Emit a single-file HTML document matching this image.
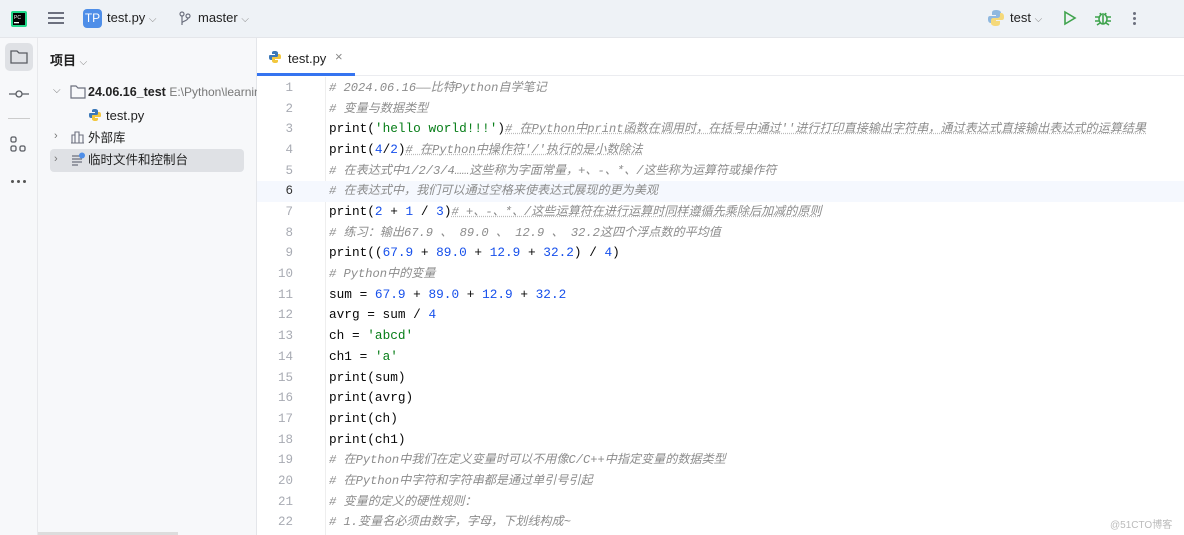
<!DOCTYPE html>
<html><head><meta charset="utf-8"><style>
*{margin:0;padding:0;box-sizing:border-box}
body{width:1184px;height:535px;overflow:hidden;background:#fff;font-family:"Liberation Sans","Noto Sans CJK SC",sans-serif;position:relative;color:#222}
.top{position:absolute;left:0;top:0;width:1184px;height:38px;background:#eef2f6;border-bottom:1px solid #e4e6ea}
.side{position:absolute;left:0;top:38px;width:38px;height:497px;background:#f7f8fa;border-right:1px solid #e8e9ec}
.proj{position:absolute;left:38px;top:38px;width:219px;height:497px;background:#f7f8fa;border-right:1px solid #e4e6ea}
.abs{position:absolute;white-space:nowrap}
.tabbar{position:absolute;left:257px;top:38px;right:0;height:38px;border-bottom:1px solid #ebecf0;background:#fff}
.gut{position:absolute;left:257px;top:77px;width:69px;height:458px;background:#fff;border-right:1px solid #eee}
.ln{position:absolute;left:257px;width:36px;text-align:right;font-family:"Liberation Mono",monospace;font-size:12.5px;line-height:16px;height:16px;color:#a8abb3}
.code{position:absolute;left:329px;font-family:"Liberation Mono","Noto Sans CJK SC",monospace;font-size:12.75px;line-height:16px;height:16px;color:#080808;white-space:pre}
.c{color:#8c8c8c;font-style:italic;font-size:12.1px;line-height:16px}
.s{color:#067d17}.n{color:#1750eb}.f{color:#000080}
.u{text-decoration:underline dotted #bbb}
</style></head><body>
<div class="top"></div>
<svg class="abs" style="left:10px;top:10px" width="18" height="18"><rect x="1" y="1" width="16" height="16" rx="2" fill="#21d789"/><rect x="3" y="3" width="12" height="12" fill="#000"/><text x="4" y="9" font-size="5" fill="#fff" font-family="Liberation Sans">PC</text><rect x="4" y="12" width="5" height="1.3" fill="#fff"/></svg>
<div class="abs" style="left:48px;top:12px;width:16px;height:2px;background:#6c707e;box-shadow:0 5px 0 #6c707e,0 10px 0 #6c707e"></div>
<div class="abs" style="left:83px;top:9px;width:19px;height:19px;border-radius:4px;background:#4e8ee8;color:#fff;font-size:12px;line-height:19px;text-align:center">TP</div>
<div class="abs" style="left:107px;top:10px;font-size:13px;color:#222">test.py <span style="color:#888;font-size:10px">⌵</span></div>
<svg class="abs" style="left:178px;top:11px" width="14" height="16" fill="none" stroke="#6c707e" stroke-width="1.2"><circle cx="4" cy="3" r="2"/><circle cx="10" cy="5" r="2"/><path d="M4 5v9M10 7c0 3-6 3-6 5"/></svg>
<div class="abs" style="left:198px;top:10px;font-size:13px">master <span style="color:#888;font-size:10px">⌵</span></div>
<svg class="abs" style="left:987px;top:9px" width="18" height="18"><path d="M9 1C5 1 5 3 5 4v2h4v1H3C1 7 1 9 1 10s0 4 3 4h1v-3c0-1 1-2 3-2h4c1 0 2-1 2-2V4c0-2-2-3-5-3z" fill="#8fb8df"/><path d="M9 17c4 0 4-2 4-3v-2H9v-1h6c2 0 2-2 2-3s0-4-3-4h-1v3c0 1-1 2-3 2H6c-1 0-2 1-2 2v3c0 2 2 3 5 3z" fill="#f5d97a"/></svg>
<div class="abs" style="left:1010px;top:10px;font-size:13px">test <span style="color:#888;font-size:10px">⌵</span></div>
<svg class="abs" style="left:1063px;top:10px" width="14" height="16"><path d="M2 2l10 6-10 6z" fill="none" stroke="#3fa34d" stroke-width="1.6"/></svg>
<svg class="abs" style="left:1094px;top:9px" width="18" height="18" fill="none" stroke="#3fa34d" stroke-width="1.6"><ellipse cx="9" cy="10" rx="4" ry="5"/><path d="M6 4l1 2M12 4l-1 2M1 8h4M13 8h4M1 12h4M13 12h4M3 16l3-2M15 16l-3-2M9 6v9"/></svg>
<div class="abs" style="left:1133px;top:12px;width:3px;height:3px;border-radius:50%;background:#6c707e;box-shadow:0 5px 0 #6c707e,0 10px 0 #6c707e"></div>

<div class="side"></div>
<div class="abs" style="left:5px;top:43px;width:28px;height:28px;border-radius:5px;background:#dfe1e5"></div>
<svg class="abs" style="left:10px;top:49px" width="18" height="16" fill="none" stroke="#5a5d63" stroke-width="1.3"><path d="M1 2h6l2 2h8v10H1z"/></svg>
<svg class="abs" style="left:9px;top:88px" width="20" height="12" fill="none" stroke="#5a5d63" stroke-width="1.3"><circle cx="10" cy="6" r="3"/><path d="M0 6h7M13 6h7"/></svg>
<div class="abs" style="left:8px;top:118px;width:22px;height:1px;background:#ccc"></div>
<svg class="abs" style="left:10px;top:136px" width="18" height="18" fill="none" stroke="#5a5d63" stroke-width="1.3"><rect x="1" y="1" width="5" height="5" rx="1.5"/><rect x="1" y="10" width="5" height="5" rx="1.5"/><rect x="10" y="10" width="5" height="5" rx="1.5"/></svg>
<div class="abs" style="left:11px;top:180px;width:3px;height:3px;border-radius:50%;background:#555;box-shadow:6px 0 0 #555,12px 0 0 #555"></div>

<div class="proj"></div>
<div class="abs" style="left:50px;top:50px;font-size:13px;font-weight:bold;color:#222">项目 <span style="color:#888;font-size:10px;font-weight:normal">⌵</span></div>
<div class="abs" style="left:53px;top:85px;font-size:10px;color:#777">⌵</div>
<svg class="abs" style="left:70px;top:85px" width="16" height="14" fill="none" stroke="#6c707e" stroke-width="1.2"><path d="M1 1h5l2 2h7v10H1z"/></svg>
<div class="abs" style="left:88px;top:85px;font-size:12.5px"><b>24.06.16_test</b> <span style="color:#777;font-size:12px">E:\Python\learnin</span></div>
<svg class="abs" style="left:88px;top:108px" width="14" height="14"><path d="M7 1C4 1 4 2 4 3v1h3v1H2C1 5 1 6 1 7s0 3 2 3h1V8c0-1 1-1 2-1h3c1 0 1-1 1-1V3c0-1-1-2-3-2z" fill="#3b78b8"/><path d="M7 13c3 0 3-1 3-2v-1H7V9h5c1 0 1-1 1-2s0-3-2-3h-1v2c0 1-1 1-2 1H5c-1 0-1 1-1 1v3c0 1 1 2 3 2z" fill="#f2c73d"/></svg>
<div class="abs" style="left:106px;top:108px;font-size:13px">test.py</div>
<div class="abs" style="left:54px;top:130px;font-size:11px;color:#777">›</div>
<svg class="abs" style="left:71px;top:131px" width="14" height="13" fill="none" stroke="#6c707e" stroke-width="1.1"><path d="M1 12V4h3v8M4 12V1h4v11M8 12V4h4v8M0 12h13"/></svg>
<div class="abs" style="left:88px;top:130px;font-size:12.5px;line-height:16px">外部库</div>
<div class="abs" style="left:50px;top:149px;width:194px;height:23px;border-radius:4px;background:#dfe1e5"></div>
<div class="abs" style="left:54px;top:153px;font-size:11px;color:#777">›</div>
<svg class="abs" style="left:71px;top:152px" width="15" height="14"><path d="M1 4h8M1 7h10M1 10h10M1 13h6" stroke="#6c707e" stroke-width="1.2"/><circle cx="11" cy="3.5" r="3" fill="#4e8ee8"/></svg>
<div class="abs" style="left:88px;top:152px;font-size:12.5px;line-height:16px">临时文件和控制台</div>
<div class="abs" style="left:38px;top:532px;width:140px;height:3px;background:#ddd"></div>

<div class="tabbar"></div>
<svg class="abs" style="left:268px;top:50px" width="14" height="14"><path d="M7 1C4 1 4 2 4 3v1h3v1H2C1 5 1 6 1 7s0 3 2 3h1V8c0-1 1-1 2-1h3c1 0 1-1 1-1V3c0-1-1-2-3-2z" fill="#3b78b8"/><path d="M7 13c3 0 3-1 3-2v-1H7V9h5c1 0 1-1 1-2s0-3-2-3h-1v2c0 1-1 1-2 1H5c-1 0-1 1-1 1v3c0 1 1 2 3 2z" fill="#f2c73d"/></svg>
<div class="abs" style="left:288px;top:51px;font-size:13px">test.py</div>
<div class="abs" style="left:335px;top:49px;font-size:13px;color:#888">×</div>
<div class="abs" style="left:257px;top:73px;width:98px;height:3px;background:#3574f0"></div>

<div class="gut"></div>
<div class="abs" style="left:257px;top:181px;width:927px;height:21px;background:#f5f8fe"></div>
<div class="ln" style="top:80px">1</div><div class="ln" style="top:101px">2</div><div class="ln" style="top:121px">3</div><div class="ln" style="top:142px">4</div><div class="ln" style="top:163px">5</div><div class="ln" style="top:183px;color:#333">6</div><div class="ln" style="top:204px">7</div><div class="ln" style="top:225px">8</div><div class="ln" style="top:245px">9</div><div class="ln" style="top:266px">10</div><div class="ln" style="top:287px">11</div><div class="ln" style="top:307px">12</div><div class="ln" style="top:328px">13</div><div class="ln" style="top:349px">14</div><div class="ln" style="top:370px">15</div><div class="ln" style="top:390px">16</div><div class="ln" style="top:411px">17</div><div class="ln" style="top:432px">18</div><div class="ln" style="top:452px">19</div><div class="ln" style="top:473px">20</div><div class="ln" style="top:494px">21</div><div class="ln" style="top:514px">22</div>

<div class="code" style="top:80px"><span class="c"># 2024.06.16——比特Python自学笔记</span></div>
<div class="code" style="top:101px"><span class="c"># 变量与数据类型</span></div>
<div class="code" style="top:121px">print(<span class="s">'hello world!!!'</span>)<span class="c u"># 在Python中print函数在调用时，在括号中通过''进行打印直接输出字符串，通过表达式直接输出表达式的运算结果</span></div>
<div class="code" style="top:142px">print(<span class="n">4</span>/<span class="n">2</span>)<span class="c u"># 在Python中操作符'/'执行的是小数除法</span></div>
<div class="code" style="top:163px"><span class="c"># 在表达式中1/2/3/4……这些称为字面常量，+、-、*、/这些称为运算符或操作符</span></div>
<div class="code" style="top:183px"><span class="c"># 在表达式中，我们可以通过空格来使表达式展现的更为美观</span></div>
<div class="code" style="top:204px">print(<span class="n">2</span> + <span class="n">1</span> / <span class="n">3</span>)<span class="c u"># +、-、*、/这些运算符在进行运算时同样遵循先乘除后加减的原则</span></div>
<div class="code" style="top:225px"><span class="c"># 练习：输出67.9 、 89.0 、 12.9 、 32.2这四个浮点数的平均值</span></div>
<div class="code" style="top:245px">print((<span class="n">67.9</span> + <span class="n">89.0</span> + <span class="n">12.9</span> + <span class="n">32.2</span>) / <span class="n">4</span>)</div>
<div class="code" style="top:266px"><span class="c"># Python中的变量</span></div>
<div class="code" style="top:287px">sum = <span class="n">67.9</span> + <span class="n">89.0</span> + <span class="n">12.9</span> + <span class="n">32.2</span></div>
<div class="code" style="top:307px">avrg = sum / <span class="n">4</span></div>
<div class="code" style="top:328px">ch = <span class="s">'abcd'</span></div>
<div class="code" style="top:349px">ch1 = <span class="s">'a'</span></div>
<div class="code" style="top:370px">print(sum)</div>
<div class="code" style="top:390px">print(avrg)</div>
<div class="code" style="top:411px">print(ch)</div>
<div class="code" style="top:432px">print(ch1)</div>
<div class="code" style="top:452px"><span class="c"># 在Python中我们在定义变量时可以不用像C/C++中指定变量的数据类型</span></div>
<div class="code" style="top:473px"><span class="c"># 在Python中字符和字符串都是通过单引号引起</span></div>
<div class="code" style="top:494px"><span class="c"># 变量的定义的硬性规则：</span></div>
<div class="code" style="top:514px"><span class="c"># 1.变量名必须由数字，字母，下划线构成~</span></div>
<div class="abs" style="left:1110px;top:516px;font-size:10px;color:#bbb">@51CTO博客</div>
</body></html>
